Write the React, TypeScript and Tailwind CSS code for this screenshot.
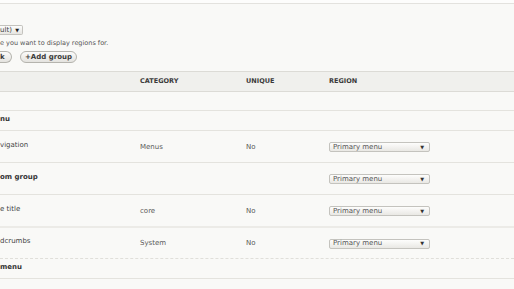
// ── Block layout rows (cropped view) ─────────────────────────────────────────
type Row =
  | { kind: 'empty'; h: string; border: string }
  | { kind: 'region'; title: string; h: string; border: string; select?: boolean }
  | { kind: 'block'; name: string; category: string; h: string; border: string }

const ROWS: Row[] = [
  { kind: 'empty', h: 'h-[19px]', border: 'border-b border-[#e4e3de]' },
  { kind: 'region', title: 'nu', h: 'h-[20px]', border: 'border-b border-[#e4e3de]' },
  { kind: 'block', name: 'vigation', category: 'Menus', h: 'h-[32px]', border: 'border-b border-[#e4e3de]' },
  { kind: 'region', title: 'om group', h: 'h-[32px]', border: 'border-b border-[#e4e3de]', select: true },
  { kind: 'block', name: 'e title', category: 'core', h: 'h-[33px]', border: 'border-b-2 border-[#ecebe7]' },
  { kind: 'block', name: 'dcrumbs', category: 'System', h: 'h-[31px]', border: 'border-b border-dashed border-[#e0dfda]' },
  { kind: 'region', title: 'menu', h: 'h-[20px]', border: 'border-b border-[#e4e3de]' },
]

function RegionSelect() {
  return (
    <div className="flex h-[10px] w-[101px] items-center justify-between rounded-[2px] border border-[#c4c3be] bg-gradient-to-b from-[#fdfdfc] to-[#e9e8e4] pl-[3px] pr-[5px] text-[7px] leading-none text-[#555]">
      <span>Primary menu</span>
      <span className="text-[5px] text-[#333]">▼</span>
    </div>
  )
}

export default function App() {
  return (
    <div
      className="h-[289px] w-[514px] overflow-hidden bg-[#f9f9f7] text-[#333]"
      style={{ fontFamily: '"DejaVu Sans", Verdana, sans-serif' }}
    >
      {/* Top strip */}
      <div className="h-[4px] border-b border-[#e3e2de] bg-[#fdfdfc]" />

      {/* Theme select */}
      <div className="mt-[21px] flex h-[10px] w-[23px] items-center justify-between rounded-r-[2px] border border-l-0 border-[#c4c3be] bg-gradient-to-b from-[#fdfdfc] to-[#e6e5e1] pr-[3px] text-[7px] leading-none text-[#444]">
        <span>ult)</span>
        <span className="text-[5px] text-[#222]">▼</span>
      </div>

      {/* Description */}
      <p className="mt-[3px] text-[6.5px] leading-[10px] text-[#555]">e you want to display regions for.</p>

      {/* Buttons */}
      <div className="mt-[3px] flex h-[12px] items-center gap-[8px]">
        <span className="flex h-[12px] w-[12px] items-center rounded-r-full border border-l-0 border-[#b5b4ae] bg-gradient-to-b from-[#fbfbfa] to-[#e4e3df] text-[7px] font-bold leading-none text-[#3a3a3a]">
          k
        </span>
        <span className="flex h-[12px] w-[57px] items-center justify-center rounded-full border border-[#b5b4ae] bg-gradient-to-b from-[#fbfbfa] to-[#e4e3df] text-[7px] font-bold leading-none text-[#3a3a3a]">
          +Add group
        </span>
      </div>

      {/* Table */}
      <div className="mt-[8px]">
        <div className="flex h-[21px] items-center border-y border-[#dcdbd6] bg-[#f0f0ed] text-[6.5px] font-bold uppercase leading-none text-[#3a3a3a]">
          <div className="w-[140px]" />
          <div className="w-[106px]">Category</div>
          <div className="w-[83px]">Unique</div>
          <div className="flex-1">Region</div>
        </div>

        {ROWS.map((row, i) => {
          if (row.kind === 'empty') return <div key={i} className={`${row.h} ${row.border}`} />
          if (row.kind === 'region')
            return (
              <div key={i} className={`flex items-center ${row.h} ${row.border}`}>
                <div className="w-[329px] pb-[3px] text-[7px] font-bold leading-none text-[#333]">{row.title}</div>
                {row.select && (
                  <div className="pt-[1px]">
                    <RegionSelect />
                  </div>
                )}
              </div>
            )
          return (
            <div key={i} className={`flex items-center ${row.h} ${row.border} text-[7px] leading-none`}>
              <div className="w-[140px] pb-[3px] text-[#444]">{row.name}</div>
              <div className="w-[106px] pt-[1px] text-[#595959]">{row.category}</div>
              <div className="w-[83px] pt-[1px] text-[#595959]">No</div>
              <div className="pt-[1px]">
                <RegionSelect />
              </div>
            </div>
          )
        })}
      </div>
    </div>
  )
}
